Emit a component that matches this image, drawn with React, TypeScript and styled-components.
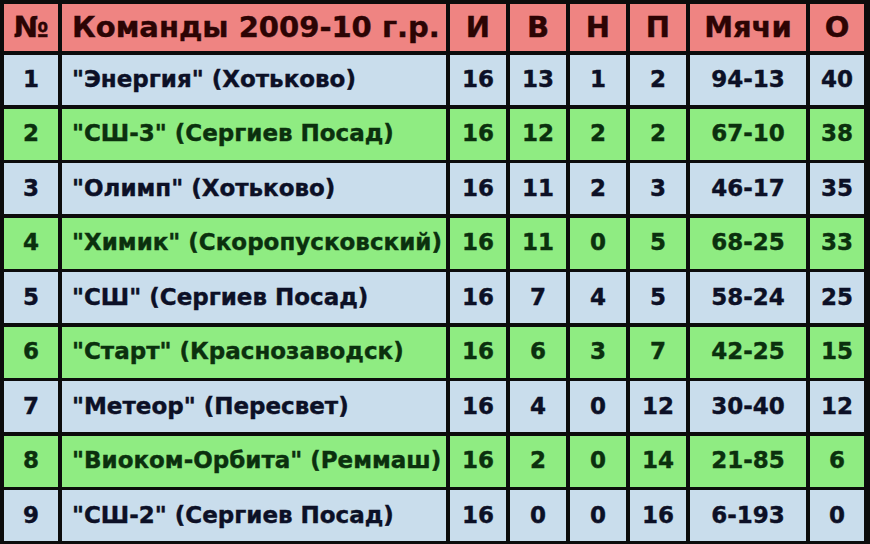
import React from "react";
import styled, { createGlobalStyle } from "styled-components";

const GlobalStyle = createGlobalStyle`
  html, body {
    margin: 0;
    padding: 0;
    background: #0c0c0c;
  }
`;

type Team = {
  pos: number;
  name: string;
  games: number;
  wins: number;
  draws: number;
  losses: number;
  goals: string;
  points: number;
};

const teams: Team[] = [
  { pos: 1, name: "\"Энергия\" (Хотьково)", games: 16, wins: 13, draws: 1, losses: 2, goals: "94-13", points: 40 },
  { pos: 2, name: "\"СШ-3\" (Сергиев Посад)", games: 16, wins: 12, draws: 2, losses: 2, goals: "67-10", points: 38 },
  { pos: 3, name: "\"Олимп\" (Хотьково)", games: 16, wins: 11, draws: 2, losses: 3, goals: "46-17", points: 35 },
  { pos: 4, name: "\"Химик\" (Скоропусковский)", games: 16, wins: 11, draws: 0, losses: 5, goals: "68-25", points: 33 },
  { pos: 5, name: "\"СШ\" (Сергиев Посад)", games: 16, wins: 7, draws: 4, losses: 5, goals: "58-24", points: 25 },
  { pos: 6, name: "\"Старт\" (Краснозаводск)", games: 16, wins: 6, draws: 3, losses: 7, goals: "42-25", points: 15 },
  { pos: 7, name: "\"Метеор\" (Пересвет)", games: 16, wins: 4, draws: 0, losses: 12, goals: "30-40", points: 12 },
  { pos: 8, name: "\"Виоком-Орбита\" (Реммаш)", games: 16, wins: 2, draws: 0, losses: 14, goals: "21-85", points: 6 },
  { pos: 9, name: "\"СШ-2\" (Сергиев Посад)", games: 16, wins: 0, draws: 0, losses: 16, goals: "6-193", points: 0 },
];

const headers = ["№", "Команды 2009-10 г.р.", "И", "В", "Н", "П", "Мячи", "О"];

type Tone = "head" | "blue" | "green";

const Table = styled.div`
  display: grid;
  grid-template-columns: 54px 384px 56px 56px 56px 56px 116px 54px;
  grid-template-rows: 47px repeat(9, 1fr);
  column-gap: 4px;
  row-gap: 3.5px;
  padding: 4px 4px 3px 4px;
  width: 870px;
  height: 544px;
  box-sizing: border-box;
  background: #0c0c0c;
  font-family: "DejaVu Sans", Verdana, sans-serif;
  font-weight: bold;
`;

const Cell = styled.div<{ $tone: Tone; $left?: boolean }>`
  display: flex;
  align-items: center;
  justify-content: ${(p) => (p.$left ? "flex-start" : "center")};
  padding-left: ${(p) => (p.$left ? "10px" : "0")};
  padding-bottom: 2px;
  white-space: nowrap;
  overflow: hidden;
  font-size: ${(p) => (p.$tone === "head" ? "29px" : "23px")};
  -webkit-text-stroke: 0.4px currentColor;
  background: ${(p) =>
    p.$tone === "head" ? "#ef8482" : p.$tone === "green" ? "#8fec82" : "#c9ddec"};
  color: ${(p) =>
    p.$tone === "head" ? "#2c0404" : p.$tone === "green" ? "#0b300e" : "#0c1026"};
`;

export default function App() {
  return (
    <>
      <GlobalStyle />
      <Table>
        {headers.map((h, i) => (
          <Cell key={h} $tone="head" $left={i === 1}>
            {h}
          </Cell>
        ))}
        {teams.map((t) => {
          const tone: Tone = t.pos % 2 === 0 ? "green" : "blue";
          const values = [t.pos, t.name, t.games, t.wins, t.draws, t.losses, t.goals, t.points];
          return values.map((v, i) => (
            <Cell key={`${t.pos}-${i}`} $tone={tone} $left={i === 1}>
              {v}
            </Cell>
          ));
        })}
      </Table>
    </>
  );
}
